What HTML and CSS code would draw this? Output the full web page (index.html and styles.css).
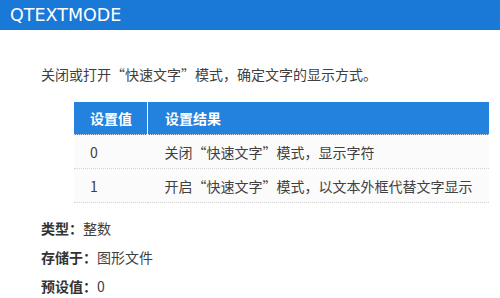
FILE: index.html
```html
<!DOCTYPE html>
<html lang="zh-CN">
<head>
<meta charset="utf-8">
<title>QTEXTMODE</title>
<link rel="stylesheet" href="styles.css">
</head>
<body>
<header class="title-bar">QTEXTMODE</header>
<main class="content">
  <p class="summary">关闭或打开“快速文字”模式，确定文字的显示方式。</p>
  <table class="settings">
    <thead>
      <tr><th class="col-value">设置值</th><th>设置结果</th></tr>
    </thead>
    <tbody>
      <tr><td>0</td><td>关闭“快速文字”模式，显示字符</td></tr>
      <tr><td>1</td><td>开启“快速文字”模式，以文本外框代替文字显示</td></tr>
    </tbody>
  </table>
  <dl class="props">
    <div class="prop"><dt>类型：</dt><dd>整数</dd></div>
    <div class="prop"><dt>存储于：</dt><dd>图形文件</dd></div>
    <div class="prop"><dt>预设值：</dt><dd>0</dd></div>
  </dl>
</main>
</body>
</html>
```
FILE: styles.css
```css
html, body {
  margin: 0;
  padding: 0;
  background: #ffffff;
}

body {
  font-family: "Noto Sans CJK SC", "Noto Sans", sans-serif;
  font-size: 14px;
  color: #404040;
  width: 500px;
  height: 298px;
  overflow: hidden;
}

.title-bar {
  height: 30px;
  line-height: 30px;
  padding-left: 10px;
  background: #1a78d7;
  color: #ffffff;
  font-family: "DejaVu Sans", "Noto Sans", sans-serif;
  font-size: 17.5px;
}

.content {
  padding-left: 41px;
}

.summary {
  margin: 0;
  padding-top: 34px;
  line-height: 20px;
}

.settings {
  margin: 18px 0 0 33px;
  width: 415px;
  border-collapse: collapse;
}

.settings th {
  height: 32px;
  padding: 0 0 0 17px;
  background: #2282dd;
  color: #ffffff;
  font-weight: bold;
  text-align: left;
  border-bottom: 1px dotted #cfd6dc;
}

.settings th.col-value {
  width: 57px;
  padding-left: 16px;
  border-right: 1px solid #ffffff;
}

.settings td {
  height: 33px;
  padding: 0 0 0 17px;
  background: #fbfbfb;
  border-bottom: 1px dotted #d4d4d4;
}

.settings td:first-child {
  padding-left: 16px;
}

.props {
  margin: 10px 0 0;
}

.prop {
  display: flex;
  height: 29px;
  align-items: center;
}

.prop dt {
  font-weight: bold;
  color: #333333;
}

.prop dd {
  margin: 0;
}
```
